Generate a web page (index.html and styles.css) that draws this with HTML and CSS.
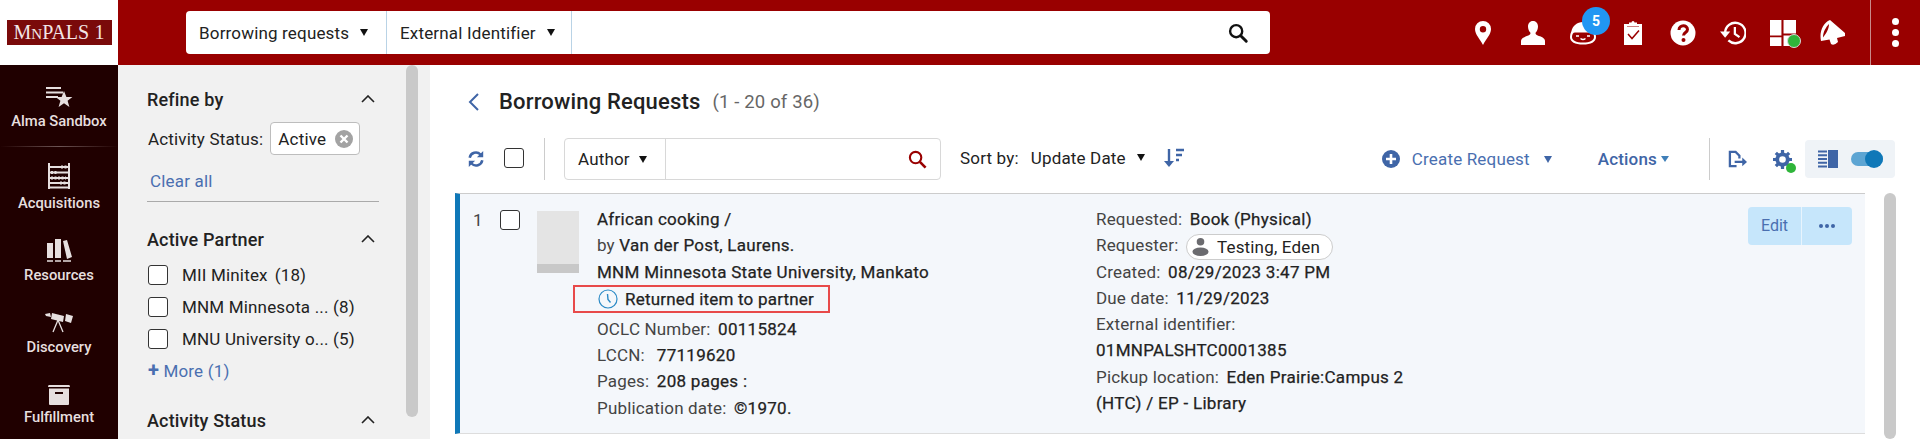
FILE: index.html
```html
<!DOCTYPE html>
<html>
  <head>
    <title>Borrowing Requests | Alma</title>
    <meta name="viewport" content="width=device-width, initial-scale=1" />
    <link rel="stylesheet" href="styles.css">
  </head>

  <body>
    <header class="topbar">
      <div class="logo-cell">
        <div class="logo"><span>M<small>N</small>PALS</span><span class="logo-num">1</span></div>
      </div>

      <div class="search">
        <div class="search-scope scope-one">Borrowing requests <i class="caret"></i></div>
        <div class="search-scope scope-two">External Identifier <i class="caret"></i></div>
        <div class="search-field">
          <svg class="search-icon" viewBox="0 0 24 24" width="22" height="22"><circle cx="10" cy="10" r="6.6" fill="none" stroke="#111" stroke-width="2.6"/><path d="M15 15l6 6" stroke="#111" stroke-width="3.2" stroke-linecap="round"/></svg>
        </div>
      </div>

      <nav class="top-icons">
        <svg class="top-icon" viewBox="0 0 26 26"><path fill-rule="evenodd" fill="#fff" d="M13 1a8 8 0 0 0-8 8c0 5.500 5 10 8 16 3-6 8-10.500 8-16a8 8 0 0 0-8-8zm0 5a3.200 3.200 0 1 1 0 6.400A3.200 3.200 0 0 1 13 6z"/></svg>
        <svg class="top-icon" viewBox="0 0 26 26"><path fill="#fff" d="M13 1c3.300 0 5 2.500 5 5.500 0 2.500-1 4.800-2.300 6-.5 1.500.3 2.400 2 3.100 3 1.100 6.800 2 7.300 5.100V25H1v-4.300c.5-3.100 4.300-4 7.300-5.100 1.700-.7 2.500-1.600 2-3.100C9 11.300 8 9 8 6.500 8 3.500 9.700 1 13 1z"/></svg>
        <div class="robot">
          <svg class="top-icon" viewBox="0 0 26 26"><path fill-rule="evenodd" fill="#fff" d="M13 2C7 2 2.500 6 1.500 11 .5 13 0 15 0 17c0 5 5 7.500 13 7.500S26 22 26 17c0-2-.5-4-1.500-6C23.500 6 19 2 13 2zM5 12.500h16c2 0 3 2 3 4.500 0 3.500-4 5.500-11 5.500S2 20.500 2 17c0-2.500 1-4.500 3-4.500z"/><path stroke="#fff" stroke-width="1.500" fill="none" d="M6 16h3M17 16h3M10.500 18.500q2.500 2 5 0"/></svg>
          <span class="badge">5</span>
        </div>
        <svg class="top-icon" viewBox="0 0 26 26"><path fill="#fff" d="M4 4h5V2.500h2.500a1.500 1.500 0 0 1 3 0H17V4h5v21H4z"/><path fill="#990000" d="M7 6.500h12V7H7z"/><path d="M8 14l4 4.500 7-8" fill="none" stroke="#990000" stroke-width="1.500"/></svg>
        <svg class="top-icon" viewBox="0 0 26 26"><circle cx="13" cy="13" r="12.500" fill="#fff"/><path d="M9 10c0-5.500 8.500-5.500 8.500-.5 0 3-4 3-4 6" fill="none" stroke="#990000" stroke-width="3"/><circle cx="13.500" cy="20" r="2" fill="#990000"/></svg>
        <svg class="top-icon" viewBox="0 0 28 26"><path d="M5.500 13a11 11 0 1 1 3.500 8" fill="none" stroke="#fff" stroke-width="2.600"/><path fill="#fff" d="M0 11.500h11L5.500 18z"/><path d="M16 6.500V14l5 3.500" fill="none" stroke="#fff" stroke-width="2.400"/></svg>
        <div class="grid-wrap">
          <svg class="top-icon" viewBox="0 0 25 25"><path fill="#fff" d="M0 0h11v15H0zM13 0h12v13H13zM0 16.500h11V25H0zM13 15h12v10H13z"/></svg>
          <span class="green-dot"></span>
        </div>
        <svg class="top-icon" viewBox="0 0 26 26"><path fill-rule="evenodd" fill="#fff" d="M10 0l15 13v3l-8 2 1 4q-4 4-7 2l-1.500-4.500L1 21C-1 12 3 3 10 0zM9 4C6 7 3 12 3 17.500 6 14 9 9 9 4z"/></svg>
      </nav>

      <div class="menu-cell">
        <span class="dot"></span><span class="dot"></span><span class="dot"></span>
      </div>
    </header>

    <div class="layout">
      <aside class="sidenav">
        <div class="nav-item nav-first">
          <svg class="nav-icon" viewBox="0 0 28 22" width="28" height="22"><path stroke="#e6dfdf" stroke-width="2" d="M1 2h15M1 6.500h17M1 11h12"/><path fill="#e6dfdf" d="M19 5l2.400 6h6l-4.800 3.800 1.800 6.200-5.400-3.700-5.400 3.700 1.800-6.200-4.800-3.800h6z"/></svg>
          <span>Alma Sandbox</span>
        </div>
        <div class="nav-rule"></div>
        <div class="nav-item nav-acq">
          <svg class="nav-icon" viewBox="0 0 24 26" width="24" height="26"><path stroke="#e6dfdf" fill="none" stroke-width="2" d="M2 0v26M22 0v26M2 4h20M2 9.500h20M2 15h20M2 20h20M2 24.500h20"/><path stroke="#e6dfdf" stroke-width="3" stroke-dasharray="2 1.500" d="M14 4h6M4 9.500h7M4 15h15M13 20h7"/></svg>
          <span>Acquisitions</span>
        </div>
        <div class="nav-item nav-res">
          <svg class="nav-icon" viewBox="0 0 26 24" width="26" height="24"><path fill="#e6dfdf" d="M1 5h6v15H1zM9 1h6v19H9zM17 3l4-1 5 17-5 2z"/><path stroke="#e6dfdf" stroke-width="1.500" d="M1 23h6M9 23h6M17 23h8"/></svg>
          <span>Resources</span>
        </div>
        <div class="nav-item nav-disc">
          <svg class="nav-icon" viewBox="0 0 28 22" width="28" height="22"><path fill="#e6dfdf" d="M0 2l5-1 1 4-5-1zM7 1l12 3-1 6-12-3zM21 2l7 2-2 7-6-2z"/><path stroke="#e6dfdf" stroke-width="1.300" fill="none" d="M13 8L8 20M13 8l5 12"/></svg>
          <span>Discovery</span>
        </div>
        <div class="nav-item nav-ful">
          <svg class="nav-icon" viewBox="0 0 22 20" width="22" height="20"><path fill="#e6dfdf" d="M1 0h20q1 0 1 2H0q0-2 1-2z"/><path fill="#e6dfdf" d="M1 3.500h20V19q0 1-1 1H2q-1 0-1-1z"/><path stroke="#200000" stroke-width="2" d="M7 8h8"/></svg>
          <span>Fulfillment</span>
        </div>
      </aside>

      <section class="facets">
        <div class="facet-list">
          <div class="facet-head head-refine">
            <span>Refine by</span>
            <svg class="chevron" viewBox="0 0 14 8" width="14" height="8"><path d="M1 7l6-6 6 6" fill="none" stroke="#222" stroke-width="1.600"/></svg>
          </div>
          <div class="applied">
            <span>Activity Status:</span>
            <span class="chip">Active
              <svg viewBox="0 0 18 18" width="18" height="18"><circle cx="9" cy="9" r="9" fill="#a3a3a3"/><path d="M5.500 5.500l7 7M12.500 5.500l-7 7" stroke="#fff" stroke-width="2.400"/></svg>
            </span>
          </div>
          <a class="clear-all">Clear all</a>
          <div class="facet-rule"></div>

          <div class="facet-head head-partner">
            <span>Active Partner</span>
            <svg class="chevron" viewBox="0 0 14 8" width="14" height="8"><path d="M1 7l6-6 6 6" fill="none" stroke="#222" stroke-width="1.600"/></svg>
          </div>
          <div class="facet-row">
            <span class="checkbox"></span>
            <span class="facet-name">MII Minitex</span>
            <span class="facet-count">(18)</span>
          </div>
          <div class="facet-row">
            <span class="checkbox"></span>
            <span class="facet-name facet-cut">MNM Minnesota ...</span>
            <span class="facet-count">(8)</span>
          </div>
          <div class="facet-row">
            <span class="checkbox"></span>
            <span class="facet-name facet-cut">MNU University o...</span>
            <span class="facet-count">(5)</span>
          </div>
          <a class="more"><b>+</b> More (1)</a>

          <div class="facet-head head-status">
            <span>Activity Status</span>
            <svg class="chevron" viewBox="0 0 14 8" width="14" height="8"><path d="M1 7l6-6 6 6" fill="none" stroke="#222" stroke-width="1.600"/></svg>
          </div>
        </div>
        <div class="facet-scroll"></div>
      </section>

      <main class="content">
        <div class="title-row">
          <svg class="back" viewBox="0 0 12 20" width="12" height="20"><path d="M10 2L2 10l8 8" fill="none" stroke="#3f65a6" stroke-width="2"/></svg>
          <h1>Borrowing Requests</h1>
          <span class="range">(1 - 20 of 36)</span>
        </div>

        <div class="toolbar">
          <svg class="refresh" viewBox="0 0 20 20" width="18" height="18"><path d="M3 8.500a7 7 0 0 1 12-3.500M17 11.500a7 7 0 0 1-12 3.500" fill="none" stroke="#3f65a6" stroke-width="2.800"/><path fill="#3f65a6" d="M18 1v7h-7zM2 19v-7h7z"/></svg>
          <span class="checkbox tool-check"></span>
          <div class="tool-rule"></div>
          <div class="find">
            <div class="find-scope">Author <i class="caret"></i></div>
            <div class="find-input">
              <svg viewBox="0 0 20 20" width="19" height="19"><circle cx="8" cy="8" r="6" fill="none" stroke="#990000" stroke-width="2.200"/><path d="M12.500 12.500l6 6" stroke="#990000" stroke-width="2.800"/></svg>
            </div>
          </div>
          <div class="sort">
            <span>Sort by:</span>
            <span class="sort-value">Update Date</span>
            <i class="caret"></i>
            <svg viewBox="0 0 22 20" width="22" height="20"><path d="M6 1v16" stroke="#3f65a6" stroke-width="2.400"/><path d="M1 13l5 6 5-6z" fill="#3f65a6"/><path d="M13 2h8M13 7h6M13 12h3" stroke="#3f65a6" stroke-width="2.400"/></svg>
          </div>
          <div class="create">
            <svg viewBox="0 0 18 18" width="18" height="18"><circle cx="9" cy="9" r="9" fill="#3f65a6"/><path d="M9 4v10M4 9h10" stroke="#fff" stroke-width="2.600"/></svg>
            <span>Create Request</span>
            <i class="caret caret-blue"></i>
          </div>
          <div class="actions">Actions <i class="caret caret-small"></i></div>
          <div class="tool-rule rule-right"></div>
          <svg class="export" viewBox="0 0 20 20" width="19" height="19"><path d="M9 17H2V2h6l4 4v3" fill="none" stroke="#3f65a6" stroke-width="2.400"/><path d="M7 12.500h9" stroke="#3f65a6" stroke-width="2.400"/><path d="M15 8l5 4.500-5 4.500z" fill="#3f65a6"/></svg>
          <div class="gear">
            <svg viewBox="0 0 20 20" width="19" height="19"><circle cx="10" cy="10" r="5.500" fill="none" stroke="#3f65a6" stroke-width="4"/><path stroke="#3f65a6" stroke-width="3.400" d="M10 0v4M10 16v4M0 10h4M16 10h4M3 3l3 3M14 14l3 3M3 17l3-3M14 6l3-3"/></svg>
            <span class="gear-dot"></span>
          </div>
          <div class="view-toggle">
            <svg viewBox="0 0 20 18" width="20" height="18"><path d="M0 1.500h9M0 5.300h9M0 9h9M0 12.700h9M0 16.500h9" stroke="#3f65a6" stroke-width="2"/><path fill="#3f65a6" d="M10 0h10v18H10z"/></svg>
            <div class="switch"><span class="knob"></span></div>
          </div>
        </div>

        <div class="results">
          <article class="row">
            <div class="row-index">1</div>
            <span class="checkbox row-check"></span>
            <div class="thumb"></div>
            <div class="col-main">
              <div class="line">African cooking /</div>
              <div class="line"><em class="by">by</em> Van der Post, Laurens.</div>
              <div class="line">MNM Minnesota State University, Mankato</div>
              <div class="status-box">
                <svg viewBox="0 0 20 20" width="20" height="20"><circle cx="10" cy="10" r="9" fill="none" stroke="#2b8ac6" stroke-width="1.200"/><path d="M9.500 5l.5 5.500 2.500 3" fill="none" stroke="#2b8ac6" stroke-width="1.400"/></svg>
                Returned item to partner
              </div>
              <div class="line line-first"><em>OCLC Number:</em> 00115824</div>
              <div class="line"><em>LCCN:</em>&nbsp; 77119620</div>
              <div class="line"><em>Pages:</em> 208 pages :</div>
              <div class="line"><em>Publication date:</em> ©1970.</div>
            </div>
            <div class="col-side">
              <div class="line"><em>Requested:</em> Book (Physical)</div>
              <div class="line"><em>Requester:</em>
                <span class="person">
                  <svg viewBox="0 0 18 20" width="17" height="19"><circle cx="9" cy="5" r="4" fill="#6b6b6f"/><ellipse cx="9" cy="15.500" rx="8.500" ry="4.500" fill="#6b6b6f"/></svg>
                  Testing, Eden
                </span>
              </div>
              <div class="line"><em>Created:</em> 08/29/2023 3:47 PM</div>
              <div class="line"><em>Due date:</em> 11/29/2023</div>
              <div class="line"><em>External identifier:</em></div>
              <div class="line">01MNPALSHTC0001385</div>
              <div class="line"><em>Pickup location:</em> Eden Prairie:Campus 2</div>
              <div class="line">(HTC) / EP - Library</div>
            </div>
            <div class="row-buttons">
              <span class="row-edit">Edit</span>
              <span class="row-more"><i></i><i></i><i></i></span>
            </div>
          </article>
          <div class="results-scroll"></div>
        </div>
      </main>
    </div>
  </body>
</html>
```

FILE: styles.css
```css
* {
  box-sizing: border-box;
}

html,
body {
  height: 439px;
  margin: 0;
  overflow: hidden;
}

body {
  font-family: Roboto, "Liberation Sans", sans-serif;
  font-size: 17px;
  letter-spacing: 0.17px;
  color: #222;
  background: #fff;
}

.caret {
  display: inline-block;
  width: 0;
  height: 0;
  border-left: 4.5px solid transparent;
  border-right: 4.5px solid transparent;
  border-top: 7px solid #111;
}

.caret-blue {
  border-top-color: #3f65a6;
}

.caret-small {
  border-left-width: 4px;
  border-right-width: 4px;
  border-top-width: 6px;
  border-top-color: #3f7fb8;
}

.checkbox {
  display: block;
  flex: none;
  width: 20px;
  height: 20px;
  background: #fff;
  border: 1px solid #333;
  border-radius: 3px;
}

/* top bar */

.topbar {
  display: flex;
  height: 65px;
  background: #990000;
}

.logo-cell {
  display: flex;
  align-items: center;
  justify-content: center;
  width: 118px;
  background: #fff;
}

.logo {
  display: flex;
  align-items: center;
  justify-content: space-between;
  width: 105px;
  height: 25px;
  padding: 0 7px;
  background: #7a0a0a;
  color: #f2e6e6;
  font-family: "Liberation Serif", serif;
  font-size: 20px;
  letter-spacing: 0;
}

.logo small {
  font-size: 15px;
}

.search {
  display: flex;
  width: 1084px;
  height: 43px;
  margin: 11px 0 0 68px;
  background: #fff;
  border-radius: 4px;
}

.search-scope {
  display: flex;
  align-items: center;
  gap: 11px;
  padding-left: 13px;
  border-right: 1px solid #b9d3e6;
  color: #222;
}

.scope-one {
  width: 201px;
}

.scope-two {
  width: 185px;
}

.search-field {
  display: flex;
  flex: 1;
  align-items: center;
  justify-content: flex-end;
  padding-right: 21px;
}

.top-icons {
  display: flex;
  align-items: center;
  gap: 24px;
  width: 600px;
  padding-left: 200px;
}

.top-icon {
  display: block;
  width: 26px;
  height: 26px;
}

.robot,
.grid-wrap {
  position: relative;
}

.badge {
  position: absolute;
  left: 0;
  top: -13px;
  width: 28px;
  height: 28px;
  margin-left: 12px;
  background: #2196f3;
  border-radius: 50%;
  color: #fff;
  font-size: 14px;
  font-weight: 700;
  line-height: 28px;
  text-align: center;
}

.green-dot {
  position: absolute;
  right: -5px;
  bottom: -2px;
  width: 14px;
  height: 14px;
  background: #2fb53a;
  border: 1px solid #d8d8d8;
  border-radius: 50%;
}

.menu-cell {
  display: flex;
  flex-direction: column;
  align-items: center;
  justify-content: center;
  gap: 4px;
  width: 50px;
  margin-left: auto;
  border-left: 1px solid #c98a8a;
}

.dot {
  width: 7px;
  height: 7px;
  background: #fff;
  border-radius: 50%;
}

/* page layout */

.layout {
  display: flex;
  height: 374px;
}

.sidenav {
  flex: none;
  width: 118px;
  background: #200000;
  color: #e6dfdf;
  font-size: 14.8px;
  font-weight: 500;
  letter-spacing: 0;
}

.nav-item {
  display: flex;
  flex-direction: column;
  align-items: center;
  gap: 4px;
}

.nav-first {
  padding-top: 21px;
  height: 81px;
}

.nav-rule {
  height: 1px;
  background: linear-gradient(to right, #200000, #6d5555 50%, #200000);
}

.nav-acq {
  padding-top: 16px;
  height: 72px;
  gap: 5px;
}

.nav-res {
  padding-top: 19px;
  height: 72px;
}

.nav-disc {
  padding-top: 21px;
  height: 72px;
}

.nav-ful {
  padding-top: 22px;
  gap: 3px;
}

/* facets */

.facets {
  display: flex;
  flex: none;
  width: 312px;
  background: #f1f1f1;
}

.facet-list {
  flex: none;
  width: 288px;
  padding: 0 29px;
}

.facet-scroll {
  width: 12px;
  height: 352px;
  background: #c9c9c9;
  border-radius: 6px;
}

.facet-head {
  display: flex;
  align-items: center;
  justify-content: space-between;
  font-size: 18px;
  font-weight: 500;
  line-height: 24px;
}

.head-refine {
  margin-top: 23px;
}

.head-partner {
  margin-top: 26px;
}

.head-status {
  margin-top: 26px;
}

.chevron {
  margin-right: 2px;
  margin-top: -2px;
}

.applied {
  display: flex;
  align-items: center;
  gap: 7px;
  margin-top: 10px;
  padding-left: 1px;
}

.chip {
  display: flex;
  align-items: center;
  justify-content: space-between;
  width: 90px;
  height: 33px;
  padding: 0 6px 0 7px;
  background: #fff;
  border: 1px solid #bdbdbd;
  border-radius: 4px;
}

.clear-all {
  display: block;
  margin-top: 15px;
  padding-left: 3px;
  color: #4a6fb0;
  line-height: 22px;
}

.facet-rule {
  height: 1px;
  margin-top: 9px;
  margin-right: -2px;
  background: #aaa;
}

.facet-row {
  display: flex;
  align-items: center;
  height: 32px;
  padding-left: 1px;
}

.head-partner + .facet-row {
  height: 33px;
  margin-top: 6px;
}

.facet-name {
  margin-left: 14px;
  white-space: nowrap;
}

.facet-cut {
  width: 146px;
  margin-right: 5px;
}

.facet-count {
  margin-left: 7px;
}

.facet-cut + .facet-count {
  margin-left: 0;
}

.more {
  display: block;
  margin-top: 4px;
  padding-left: 1px;
  color: #4a6fb0;
  line-height: 24px;
}

.more b {
  font-size: 20px;
  line-height: 20px;
}

/* main content */

.content {
  flex: 1;
  min-width: 0;
}

.title-row {
  display: flex;
  align-items: center;
  height: 73px;
  padding-left: 38px;
}

.back {
  margin-right: 19px;
}

h1 {
  margin: 0;
  font-size: 22px;
  font-weight: 500;
  color: #222;
}

.range {
  margin-left: 12px;
  color: #666;
  font-size: 18.5px;
}

.toolbar {
  display: flex;
  align-items: center;
  height: 42px;
  padding: 0 25px 0 37px;
}

.tool-check {
  margin-left: 19px;
  margin-top: -2px;
}

.tool-rule {
  width: 1px;
  height: 42px;
  margin-left: 20px;
  background: #ccc;
}

.find {
  display: flex;
  width: 377px;
  height: 42px;
  margin-left: 19px;
  border: 1px solid #d8d8d8;
  border-radius: 4px;
}

.find-scope {
  display: flex;
  align-items: center;
  gap: 9px;
  width: 101px;
  padding-left: 13px;
  border-right: 1px solid #d8d8d8;
}

.find-input {
  display: flex;
  flex: 1;
  align-items: center;
  justify-content: flex-end;
  padding-right: 13px;
}

.sort {
  display: flex;
  align-items: center;
  margin-left: 19px;
  margin-top: -3px;
}

.sort-value {
  margin: 0 11px 0 12px;
}

.sort svg {
  margin-left: 18px;
}

.create {
  display: flex;
  align-items: center;
  gap: 12px;
  margin-left: auto;
  color: #4a6fb0;
}

.create .caret {
  margin-left: 2px;
}

.actions {
  display: flex;
  align-items: center;
  gap: 4px;
  margin-left: 46px;
  color: #3f65a6;
  font-weight: 500;
}

.rule-right {
  margin-left: 40px;
}

.export {
  margin-left: 18px;
}

.gear {
  position: relative;
  margin-left: 26px;
  height: 19px;
}

.gear svg {
  display: block;
}

.gear-dot {
  position: absolute;
  right: -4px;
  bottom: -4px;
  width: 10px;
  height: 10px;
  background: #2fb53a;
  border-radius: 50%;
}

.view-toggle {
  display: flex;
  align-items: center;
  width: 90px;
  height: 38px;
  margin-left: 13px;
  padding-left: 13px;
  background: #eff3f7;
  border-radius: 4px;
}

.switch {
  position: relative;
  width: 32px;
  height: 14px;
  margin-left: 13px;
  background: #5da5d3;
  border-radius: 7px;
}

.knob {
  position: absolute;
  right: 0;
  top: -2px;
  width: 18px;
  height: 18px;
  background: #0f78b8;
  border-radius: 50%;
}

/* result row */

.results {
  display: flex;
  margin: 13px 0 0 25px;
}

.row {
  display: flex;
  align-items: flex-start;
  width: 1410px;
  height: 241px;
  padding-top: 13px;
  background: #f4f7fb;
  border-left: 5px solid #0f78b8;
  border-top: 1px solid #ccc;
  border-bottom: 1px solid #ddd;
}

.results-scroll {
  width: 12px;
  height: 246px;
  margin-left: 19px;
  background: #c9c9c9;
  border-radius: 6px;
}

.row-index {
  width: 40px;
  margin-top: 1px;
  padding-left: 13px;
  color: #444;
  line-height: 24px;
}

.row-check {
  margin-top: 3px;
}

.thumb {
  flex: none;
  width: 42px;
  height: 62px;
  margin: 4px 0 0 17px;
  background: #e4e4e4;
  border-bottom: 9px solid #c8c8c8;
}

.col-main {
  width: 499px;
  margin-left: 18px;
}

.col-side {
  width: 652px;
}

.line {
  height: 26.25px;
  letter-spacing: 0.28px;
  line-height: 24px;
  white-space: nowrap;
  -webkit-text-stroke: 0.25px #222;
}

.line em {
  font-style: normal;
  letter-spacing: 0.17px;
  color: #444;
  margin-right: 3px;
  -webkit-text-stroke: 0;
}

.line em.by {
  margin-right: 0;
}

.status-box {
  display: flex;
  align-items: center;
  gap: 7px;
  width: 257px;
  height: 28px;
  margin: -1px 0 0 -24px;
  padding-left: 23px;
  border: 2px solid #e84a4a;
  letter-spacing: 0.2px;
  -webkit-text-stroke: 0.25px #222;
}

.line-first {
  margin-top: 4px;
}

.person {
  display: inline-flex;
  align-items: center;
  gap: 8px;
  height: 26px;
  padding: 0 12px 0 5px;
  background: #fff;
  border: 1px solid #ccc;
  border-radius: 13px;
  color: #222;
  letter-spacing: 0.17px;
  vertical-align: middle;
  -webkit-text-stroke: 0;
}

.row-buttons {
  display: flex;
  height: 38px;
  overflow: hidden;
  background: #c6e6fb;
  border-radius: 4px;
  font-size: 16px;
  letter-spacing: 0;
  -webkit-text-stroke: 0;
}

.row-edit {
  width: 54px;
  color: #4a6fb0;
  line-height: 38px;
  text-align: center;
  border-right: 1px solid #e8f4fd;
}

.row-more {
  display: flex;
  align-items: center;
  justify-content: center;
  gap: 2px;
  width: 50px;
}

.row-more i {
  width: 4px;
  height: 4px;
  background: #3f65a6;
  border-radius: 50%;
}
```
